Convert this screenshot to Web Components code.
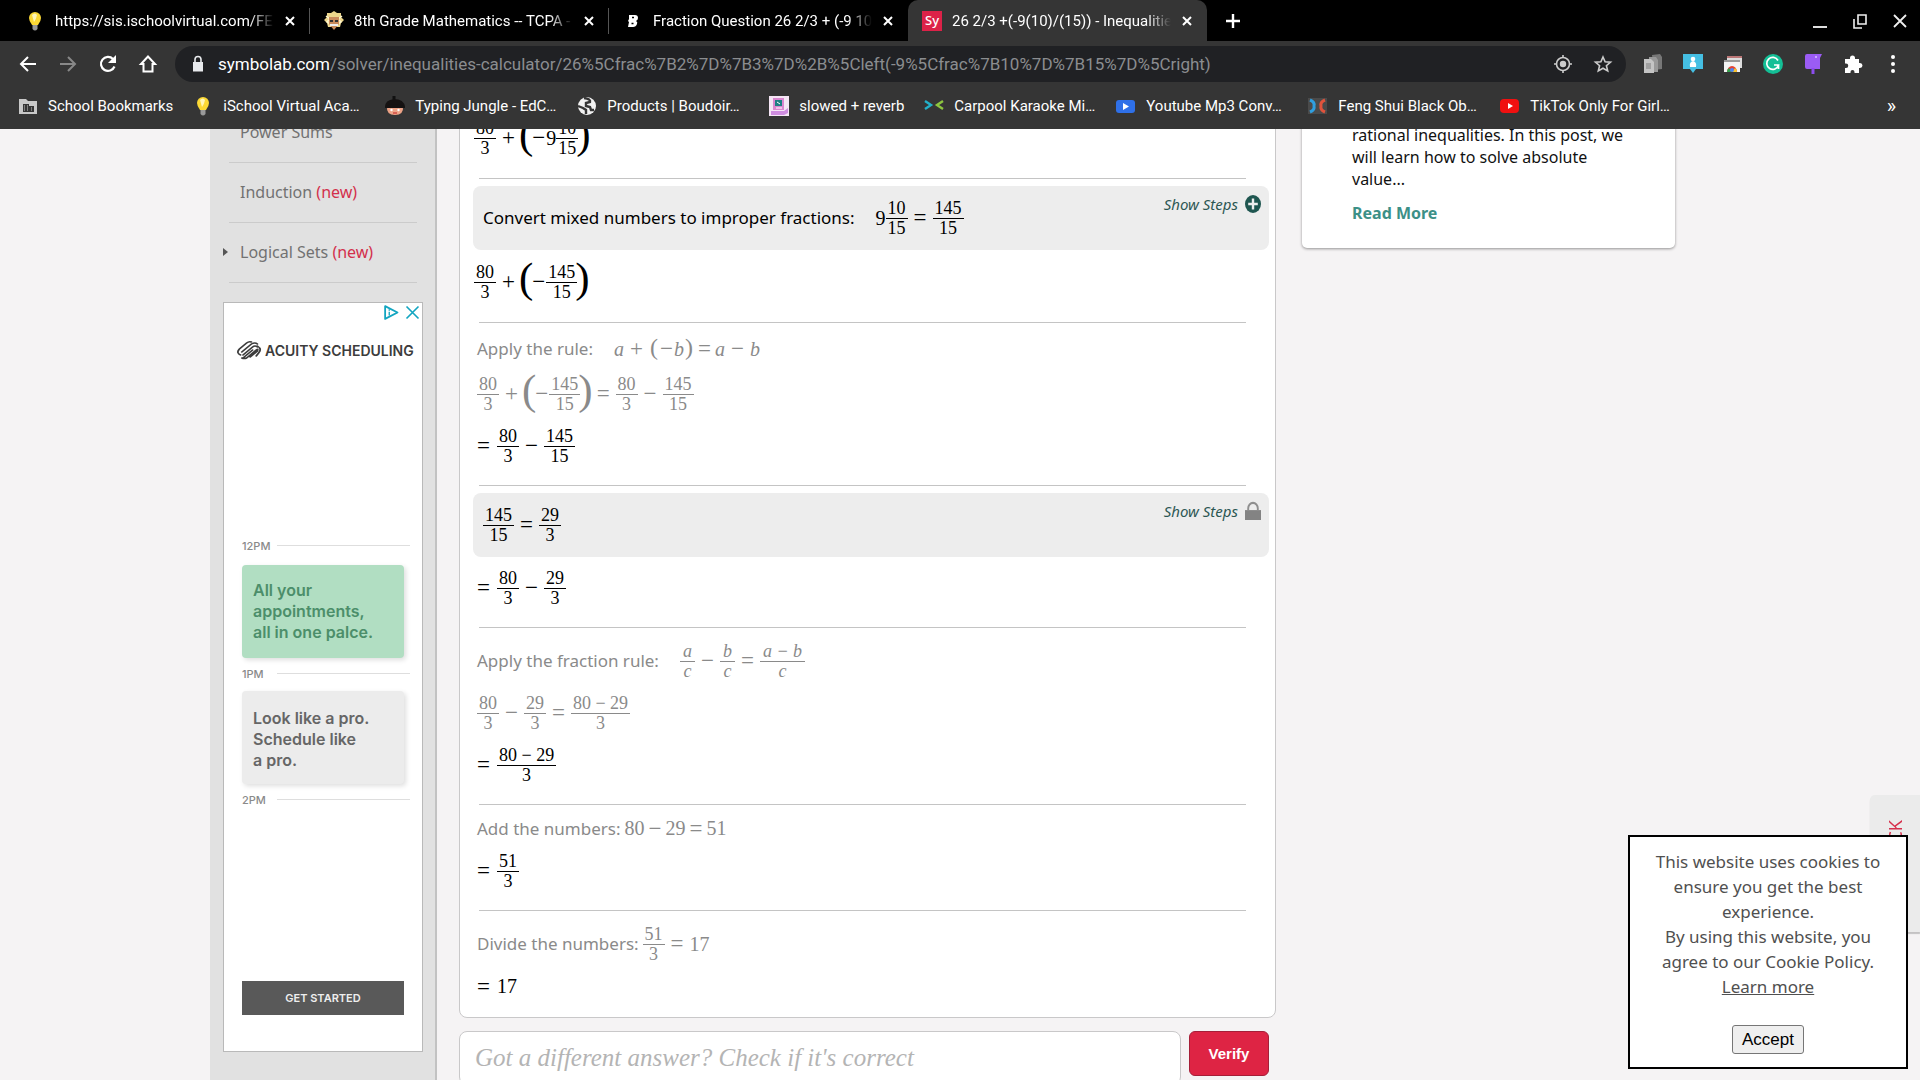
<!DOCTYPE html>
<html lang="en">
<head>
<meta charset="utf-8">
<title>Inequalities Calculator</title>
<style>
	html,body{
		margin: 0;
		height: 100%;
		overflow: hidden;
		background: #f5f3f4;
		font-family: "Noto Sans", sans-serif;
		font-size: 16px;
	}
	body{display: flex; flex-direction: column;}
</style>
</head>
<body>

<template id="ui-icon"><style>
	:host{display: inline-flex; flex: none; width: 20px; height: 20px;}
	svg{width: 100%; height: 100%; display: block; overflow: visible;}
</style><svg></svg></template>

<template id="browser-tab"><style>
	:host{
		display: flex;
		align-items: center;
		flex: 0 1 299px;
		min-width: 0;
		box-sizing: border-box;
		height: 41px;
		padding: 0 10px 0 14px;
		color: white;
		border-radius: 10px 10px 0 0;
	}
	:host([active]){background: #353535;}
	.title{
		flex: 1;
		min-width: 0;
		margin: 0 6px 0 10px;
		overflow: hidden;
		white-space: nowrap;
		-webkit-mask-image: linear-gradient(to left, transparent 0, black 24px);
		mask-image: linear-gradient(to left, transparent 0, black 24px);
	}
	button{display: flex; padding: 0; border: 0; background: none; color: inherit;}
	i{width: 1px; height: 26px; margin-right: -10px; margin-left: 9px; background: #555;}
	:host([active]) i, :host([last]) i{visibility: hidden;}
</style><slot name="icon"></slot><span class="title"><slot></slot></span><button aria-label="Close tab"><ui-icon name="close"></ui-icon></button><i></i></template>

<template id="tool-button"><style>
	:host{display: flex; flex: none;}
	button{display: flex; justify-content: center; align-items: center; width: 40px; height: 40px; padding: 0; border: 0; background: none; color: inherit;}
</style><button><slot></slot></button></template>

<template id="bookmark-link"><style>
	:host{display: flex; flex: none;}
	:host([full]){width: 172px;}
	a{display: flex; align-items: center; gap: 10px; color: white; text-decoration: none; white-space: nowrap;}
</style><a href="#"><slot name="icon"></slot><span><slot></slot></span></a></template>

<template id="browser-chrome"><style>
	:host{display: block; flex: none; position: relative; z-index: 2; font-family: Roboto, sans-serif; font-size: 15px; color: white; background: #353535;}
	.tabs{display: flex; align-items: center; height: 41px; padding-left: 11px; background: black;}
	.window{display: flex; margin-left: auto;}
	.bar{display: flex; align-items: center; height: 46px; padding: 0 7px 0 8px;}
	.omni{
		flex: 1;
		min-width: 0;
		display: flex;
		align-items: center;
		height: 36px;
		margin: 0 7px;
		padding: 0 3px 0 13px;
		border-radius: 18px;
		background: #202124;
		color: #9aa0a6;
		font-size: 17px;
	}
	.url{flex: 1; margin-left: 10px; white-space: nowrap; overflow: hidden; color: #8b8d90;}
	.dim{color: #888;}
	.marks{display: flex; align-items: center; gap: 20px; height: 38px; padding: 0 24px 4px 18px;}
	.more{margin-left: auto; border: 0; padding: 0; background: none; color: white; font: 20px Roboto, sans-serif;}
</style>
<div class="tabs"><slot name="tabs"></slot><div class="window">
	<tool-button label="Minimize"><ui-icon name="minimize"></ui-icon></tool-button>
	<tool-button label="Restore"><ui-icon name="restore"></ui-icon></tool-button>
	<tool-button label="Close"><ui-icon name="closewin"></ui-icon></tool-button>
</div></div>
<div class="bar">
	<tool-button label="Back"><ui-icon name="back"></ui-icon></tool-button>
	<tool-button label="Forward" class="dim"><ui-icon name="forward"></ui-icon></tool-button>
	<tool-button label="Reload"><ui-icon name="reload"></ui-icon></tool-button>
	<tool-button label="Home"><ui-icon name="home"></ui-icon></tool-button>
	<div class="omni"><ui-icon name="lock"></ui-icon><span class="url"><slot name="url"></slot></span>
		<tool-button label="Location"><ui-icon name="target"></ui-icon></tool-button>
		<tool-button label="Bookmark this page"><ui-icon name="star"></ui-icon></tool-button>
	</div>
	<slot name="extensions"></slot>
</div>
<div class="marks"><slot name="bookmarks"></slot><button class="more">»</button></div>
</template>

<template id="math-frac"><style>
	:host{display: inline-flex; flex-direction: column; align-items: center; font-size: 18px; line-height: 19px; white-space: nowrap;}
	span{padding: 0 2px;}
	.num{border-bottom: 1px solid; align-self: stretch; text-align: center;}
	:host([italic]) span{font-style: italic; padding: 0 3px;}
</style><span class="num"></span><span class="den"></span></template>

<template id="math-op"><style>
	:host{display: inline-block; margin: 0 6px; font-size: 23px; line-height: 20px;}
	:host([lead]){margin: 0 7px 0 0;}
	:host([tight]){margin: 0 4px;}
	:host([unary]){margin: 0 1px;}
</style><slot></slot></template>

<template id="math-paren"><style>
	:host{display: inline-block; margin: -8px -2px 0; font-size: 43px; line-height: 46px;}
	:host([small]){margin: -4px 1px 0; font-size: 24px; line-height: 30px;}
</style><slot></slot></template>

<template id="math-line"><style>
	:host{display: flex; align-items: center; height: 52px; padding-left: 4px; font-family: "Liberation Serif", serif; font-size: 20px; color: black; white-space: nowrap;}
	:host([flush]){padding-left: 1px; height: 54px;}
	:host([gray]){color: #8a8a8a;}
	:host([size="rule"]){height: 38px;}
	:host([size="text"]){height: 33px;}
	.label{font-family: "Noto Sans", sans-serif; font-size: 17px; line-height: 24px; white-space: pre;}
	.label:not(:empty){margin-right: 4px;}
	:host([wide]) .label{margin-right: 21px;}
</style><span class="label"></span><slot></slot></template>

<template id="step-box"><style>
	:host{display: flex; align-items: flex-start; min-height: 64px; margin-bottom: 5px; padding-right: 8px; background: #ededed; border-radius: 8px;}
	.body{flex: 1; padding: 6px 0 6px 6px;}
	button{display: flex; align-items: center; gap: 7px; margin-top: 7px; padding: 0; border: 0; background: none; color: #2c5753; font: italic 15px/22px "Noto Sans", sans-serif;}
	ui-icon{width: 16px; height: 18px;}
</style><div class="body"><slot></slot></div><button>Show Steps <ui-icon></ui-icon></button></template>

<template id="solution-card"><style>
	:host{display: block; box-sizing: border-box; padding: 7px 6px 14px 13px; background: white; border: 1px solid #c9c8c9; border-radius: 0 0 8px 8px;}
	::slotted(hr){margin: 13px 23px 7px 6px; border: 0; border-top: 1px solid #c4c4c4;}
</style><slot></slot></template>

<template id="answer-form"><style>
	:host{display: flex; align-items: flex-start; gap: 8px; margin-top: 13px; padding-right: 7px;}
	input{flex: 1; min-width: 0; box-sizing: border-box; height: 54px; padding: 0 15px; border: 1px solid #c9c8c9; border-radius: 8px; background: white; font: italic 25px "Liberation Serif", serif;}
	input::placeholder{color: #b4b4b4; opacity: 1;}
	button{width: 80px; height: 45px; padding: 0; border: 1px solid #a51f38; border-radius: 6px; background: #de2444; color: white; font: bold 15px "Liberation Sans", sans-serif;}
</style><input type="text" aria-label="Your answer" placeholder="Got a different answer? Check if it's correct"><button>Verify</button></template>

<template id="topic-item"><style>
	:host{display: block; height: 59px; margin: 0 18px 0 19px; border-bottom: 1px solid #cbcbcb;}
	a{display: flex; align-items: center; box-sizing: border-box; height: 100%; padding-bottom: 2px; color: #727272; text-decoration: none; font-size: 16px; white-space: pre;}
	i{width: 11px; margin-left: -6px; margin-right: 6px; display: flex;}
	i::before{content: ''; display: none; border: solid transparent; border-width: 4px 0 4px 5px; border-left-color: #555;}
	:host([expandable]) i::before{display: block;}
	.new{color: #d3304c;}
</style><a href="#"><i></i><slot></slot><span class="new"></span></a></template>

<template id="scheduling-ad"><style>
	:host{display: flex; flex-direction: column; box-sizing: border-box; height: 750px; margin: 19px 12px 0 13px; border: 1px solid #b9b9b9; background: white; font-family: Inter, sans-serif;}
	.choices{display: flex; justify-content: flex-end; gap: 6px; padding: 2px 2px 0;}
	.choices ui-icon{width: 15px; height: 15px;}
	.brand{display: flex; align-items: center; gap: 4px; margin: 18px 0 0 13px; height: 24px; font-size: 14px; font-weight: 600; color: #3c3c3c; white-space: nowrap;}
	.brand ui-icon{width: 24px; height: 20px;}
	.hour{display: flex; align-items: center; box-sizing: border-box; height: 33px; padding-bottom: 2px; margin: 0 12px 0 18px; color: #8a8a8a; font-size: 11px; font-weight: 500;}
	.hour span{width: 35px;}
	.hour::after{content: ''; flex: 1; border-top: 1px solid #dedede;}
	.note{display: flex; align-items: center; box-sizing: border-box; height: 93px; margin: 0 18px; padding-left: 11px; border-radius: 4px; font-size: 16px; line-height: 21px; font-weight: 600; box-shadow: 2px 2px 5px #0002;}
	.green{margin-top: 2px; background: #b1dec2; color: #4c8e6a;}
	.grey{padding-top: 4px; background: #ececec; color: #666;}
	.first{margin-top: 168px;}
	.cta{margin: auto 18px 36px; height: 34px; border: 0; background: #595959; color: #eee; font: 600 11px Inter, sans-serif;}
</style>
<div class="choices"><ui-icon name="adchoices"></ui-icon><ui-icon name="adclose"></ui-icon></div>
<div class="brand"><ui-icon name="acuity"></ui-icon>ACUITY SCHEDULING</div>
<div class="hour first"><span>12PM</span></div>
<div class="note green">All your<br>appointments,<br>all in one palce.</div>
<div class="hour"><span>1PM</span></div>
<div class="note grey">Look like a pro.<br>Schedule like<br>a pro.</div>
<div class="hour"><span>2PM</span></div>
<button class="cta">GET STARTED</button>
</template>

<template id="blog-card"><style>
	:host{display: block; box-sizing: border-box; padding: 21px 40px 24px 50px; background: white; border-radius: 5px; box-shadow: 0 1px 3px #0006; font-size: 16px; line-height: 22px; color: #111;}
	a{display: block; margin-top: 12px; color: #3c9087; font-size: 16px; font-weight: bold; text-decoration: none;}
</style><slot></slot><a href="#">Read More</a></template>

<template id="cookie-notice"><style>
	:host{
		position: fixed;
		right: 12px;
		bottom: 11px;
		z-index: 3;
		display: flex;
		flex-direction: column;
		align-items: center;
		box-sizing: border-box;
		width: 280px;
		padding: 12px 10px 13px;
		border: 2px solid black;
		background: white;
		color: #505050;
		font-size: 17px;
		line-height: 25px;
		text-align: center;
	}
	a{color: inherit;}
	button{margin-top: 26px; height: 29px; padding: 0 9px; border: 1px solid #767676; border-radius: 3px; background: #efefef; color: black; font: 17px "Liberation Sans", sans-serif;}
</style><div><slot></slot><br><a href="#">Learn more</a></div><button>Accept</button></template>

<template id="feedback-tab"><style>
	:host{position: fixed; right: 0; bottom: 148px; z-index: 1;}
	button{display: block; width: 50px; height: 137px; padding: 0; border: 0; border-radius: 5px 0 0 5px; background: #ebebeb; box-shadow: 0 2px 1px #0003; color: #d6304c; font: 18px "Noto Sans", sans-serif; writing-mode: vertical-rl;}
	span{display: inline-block; transform: rotate(180deg);}
</style><button><span>FEEDBACK</span></button></template>

<template id="page-columns"><style>
	:host{display: block; flex: 1; min-height: 0; overflow: hidden;}
	/* scrolled content: the first rows are partly out of view */
	.scrolled{display: grid; grid-template-columns: 227px minmax(0, 817px) 373px; align-items: start; margin-top: -26px; padding-left: 210px;}
	.side{box-sizing: border-box; min-height: 100vh; background: #e1e1e1; border-right: 2px solid #c2c2c2;}
	.main{margin-left: 22px; margin-right: -22px;}
	.aside{margin-left: 48px; margin-right: -48px;}
</style><div class="scrolled"><div class="side"><slot name="side"></slot></div><div class="main"><slot></slot></div><div class="aside"><slot name="aside"></slot></div></div></template>

<browser-chrome>
	<browser-tab slot="tabs"><ui-icon slot="icon" name="bulb"></ui-icon>https://sis.ischoolvirtual.com/FE</browser-tab>
	<browser-tab slot="tabs"><ui-icon slot="icon" name="einstein"></ui-icon>8th Grade Mathematics -- TCPA -</browser-tab>
	<browser-tab slot="tabs" last><ui-icon slot="icon" name="brainly"></ui-icon>Fraction Question 26 2/3 + (-9 10</browser-tab>
	<browser-tab slot="tabs" active><ui-icon slot="icon" name="symbolab"></ui-icon>26 2/3 +(-9(10)/(15)) - Inequalities</browser-tab>
	<tool-button slot="tabs" label="New tab" style="margin-left:6px"><ui-icon name="plus"></ui-icon></tool-button>
	<span slot="url"><span style="color:white">symbolab.com</span>/solver/inequalities-calculator/26%5Cfrac%7B2%7D%7B3%7D%2B%5Cleft(-9%5Cfrac%7B10%7D%7B15%7D%5Cright)</span>
	<tool-button slot="extensions" label="Copy pages"><ui-icon name="pages"></ui-icon></tool-button>
	<tool-button slot="extensions" label="Classroom"><ui-icon name="person"></ui-icon></tool-button>
	<tool-button slot="extensions" label="Web store"><ui-icon name="store"></ui-icon></tool-button>
	<tool-button slot="extensions" label="Grammarly"><ui-icon name="grammar"></ui-icon></tool-button>
	<tool-button slot="extensions" label="Highlighter"><ui-icon name="purple"></ui-icon></tool-button>
	<tool-button slot="extensions" label="Extensions"><ui-icon name="puzzle"></ui-icon></tool-button>
	<tool-button slot="extensions" label="Menu"><ui-icon name="dots"></ui-icon></tool-button>
	<bookmark-link slot="bookmarks"><ui-icon slot="icon" name="folder"></ui-icon>School Bookmarks</bookmark-link>
	<bookmark-link slot="bookmarks" full><ui-icon slot="icon" name="bulb"></ui-icon>iSchool Virtual Aca…</bookmark-link>
	<bookmark-link slot="bookmarks" full><ui-icon slot="icon" name="ninja"></ui-icon>Typing Jungle - EdC…</bookmark-link>
	<bookmark-link slot="bookmarks" full><ui-icon slot="icon" name="globe"></ui-icon>Products | Boudoir…</bookmark-link>
	<bookmark-link slot="bookmarks"><ui-icon slot="icon" name="computer"></ui-icon>slowed + reverb</bookmark-link>
	<bookmark-link slot="bookmarks" full><ui-icon slot="icon" name="arrows"></ui-icon>Carpool Karaoke Mi…</bookmark-link>
	<bookmark-link slot="bookmarks" full><ui-icon slot="icon" name="bluevideo"></ui-icon>Youtube Mp3 Conv…</bookmark-link>
	<bookmark-link slot="bookmarks" full><ui-icon slot="icon" name="feng"></ui-icon>Feng Shui Black Ob…</bookmark-link>
	<bookmark-link slot="bookmarks" full><ui-icon slot="icon" name="youtube"></ui-icon>TikTok Only For Girl…</bookmark-link>
</browser-chrome>

<page-columns>
	<topic-item slot="side">Power Sums</topic-item>
	<topic-item slot="side" new>Induction </topic-item>
	<topic-item slot="side" new expandable>Logical Sets </topic-item>
	<scheduling-ad slot="side"></scheduling-ad>

	<solution-card>
		<math-line flush><math-frac num="80" den="3"></math-frac><math-op>+</math-op><math-paren>(</math-paren><math-op unary>−</math-op>9<math-frac num="10" den="15"></math-frac><math-paren>)</math-paren></math-line>
		<hr>
		<step-box icon="plusround"><math-line label="Convert mixed numbers to improper fractions:" wide>9<math-frac num="10" den="15"></math-frac><math-op>=</math-op><math-frac num="145" den="15"></math-frac></math-line></step-box>
		<math-line flush><math-frac num="80" den="3"></math-frac><math-op>+</math-op><math-paren>(</math-paren><math-op unary>−</math-op><math-frac num="145" den="15"></math-frac><math-paren>)</math-paren></math-line>
		<hr>
		<math-line gray size="rule" label="Apply the rule:" wide><i>a</i><math-op>+</math-op><math-paren small>(</math-paren><math-op unary>−</math-op><i>b</i><math-paren small>)</math-paren><math-op tight>=</math-op><i>a</i><math-op>−</math-op><i>b</i></math-line>
		<math-line gray><math-frac num="80" den="3"></math-frac><math-op>+</math-op><math-paren>(</math-paren><math-op unary>−</math-op><math-frac num="145" den="15"></math-frac><math-paren>)</math-paren><math-op>=</math-op><math-frac num="80" den="3"></math-frac><math-op>−</math-op><math-frac num="145" den="15"></math-frac></math-line>
		<math-line><math-op lead>=</math-op><math-frac num="80" den="3"></math-frac><math-op>−</math-op><math-frac num="145" den="15"></math-frac></math-line>
		<hr>
		<step-box icon="padlock"><math-line><math-frac num="145" den="15"></math-frac><math-op>=</math-op><math-frac num="29" den="3"></math-frac></math-line></step-box>
		<math-line><math-op lead>=</math-op><math-frac num="80" den="3"></math-frac><math-op>−</math-op><math-frac num="29" den="3"></math-frac></math-line>
		<hr>
		<math-line gray label="Apply the fraction rule:" wide><math-frac italic num="a" den="c"></math-frac><math-op>−</math-op><math-frac italic num="b" den="c"></math-frac><math-op>=</math-op><math-frac italic num="a − b" den="c"></math-frac></math-line>
		<math-line gray><math-frac num="80" den="3"></math-frac><math-op>−</math-op><math-frac num="29" den="3"></math-frac><math-op>=</math-op><math-frac num="80 − 29" den="3"></math-frac></math-line>
		<math-line><math-op lead>=</math-op><math-frac num="80 − 29" den="3"></math-frac></math-line>
		<hr>
		<math-line gray size="text" label="Add the numbers:">80<math-op tight>−</math-op>29<math-op tight>=</math-op>51</math-line>
		<math-line><math-op lead>=</math-op><math-frac num="51" den="3"></math-frac></math-line>
		<hr>
		<math-line gray label="Divide the numbers:"><math-frac num="51" den="3"></math-frac><math-op>=</math-op>17</math-line>
		<math-line size="text"><math-op lead>=</math-op>17</math-line>
	</solution-card>
	<answer-form></answer-form>

	<blog-card slot="aside">rational inequalities. In this post, we<br>will learn how to solve absolute<br>value...</blog-card>
</page-columns>

<feedback-tab></feedback-tab>
<cookie-notice>This website uses cookies to<br>ensure you get the best<br>experience.<br>By using this website, you<br>agree to our Cookie Policy.</cookie-notice>

<script>
// all icons are drawn on a 20x20 grid
const ICONS = {
	close: '<path d="M6 6l8 8M14 6l-8 8" stroke="#fff" stroke-width="2"/>',
	plus: '<path d="M10 3v14M3 10h14" stroke="#fff" stroke-width="2.4"/>',
	minimize: '<path d="M3 16h14" stroke="#ddd" stroke-width="2"/>',
	restore: '<path d="M8 4h8v9H8zM4 8v9h8" stroke="#eee" stroke-width="1.6" fill="none"/>',
	closewin: '<path d="M4 4l12 12M16 4L4 16" stroke="#eee" stroke-width="1.8"/>',
	back: '<path d="M18 10H3M10 3l-7 7 7 7" fill="none" stroke="currentColor" stroke-width="2"/>',
	forward: '<path d="M2 10h15M10 3l7 7-7 7" fill="none" stroke="currentColor" stroke-width="2"/>',
	reload: '<path d="M16.5 12.5A7 7 0 1 1 15 5" fill="none" stroke="#fff" stroke-width="2.2"/><path d="M18 1v8h-8z" fill="#fff"/>',
	home: '<path d="M10 2.5L3 10h2.500v7.500h9V10H17z" fill="none" stroke="#fff" stroke-width="2"/>',
	lock: '<path d="M5 8h10v9.500H5z" fill="#e8eaed"/><path d="M7 8V5.500a3 3 0 0 1 6 0V8" fill="none" stroke="#e8eaed" stroke-width="1.6"/>',
	target: '<circle cx="10" cy="10" r="6.500" fill="none" stroke="#ccc" stroke-width="1.6"/><circle cx="10" cy="10" r="3.200" fill="#ccc"/><path d="M10 1v3M10 16v3M1 10h3M16 10h3" stroke="#ccc" stroke-width="1.6"/>',
	star: '<path d="M10 3l2.100 4.800 5.400.400-4.100 3.500 1.300 5.200L10 14.200l-4.700 2.700 1.300-5.200-4.100-3.500 5.400-.400z" fill="none" stroke="#ccc" stroke-width="1.6"/>',
	pages: '<path d="M9 1l8-1 2 3v12l-8 1z" fill="#777"/><path d="M6 3h7l2 3v12H6z" fill="#999"/><path d="M1 5h7l3 3v11H1z" fill="#c4c4c4"/><path d="M3 9h5v6H3z" fill="#a0a0a0"/>',
	person: '<path d="M0 0h20v15h-7l-3 4-3-4H0z" fill="#45bfe3"/><circle cx="10" cy="5" r="2.300" fill="#fff"/><path d="M7 13q-1-5 3-6 4 1 3 6z" fill="#fff"/>',
	store: '<path d="M4 2h15v12H4z" fill="#ddd"/><path d="M4 2h15v2H4z" fill="#b77"/><path d="M1 6h16v12H1z" fill="#f4f4f4"/><path d="M1 6h16v2H1z" fill="#999"/><path d="M4 18a5 6 0 0 1 10 0z" fill="#e34133"/><path d="M4 18q0-3 2-4l3 4z" fill="#31a350"/><path d="M14 18q0-3-2-4l-3 4z" fill="#f6c32d"/><circle cx="9" cy="16" r="2" fill="#4b86ef"/>',
	grammar: '<circle cx="10" cy="10" r="10" fill="#14bf96"/><path d="M15 6.500A6 6 0 1 0 15.500 11H11M15.500 11v4" fill="none" stroke="#fff" stroke-width="1.7"/>',
	purple: '<path d="M2 2q0-2 2-2h15l-2 4v11H4q-2 0-2-2z" fill="#9b5cf4"/><path d="M10 14v6" stroke="#8c4ded" stroke-width="3"/><circle cx="13" cy="3" r="1" fill="#d9c2ff"/>',
	puzzle: '<path d="M2 5h5V4a2.500 2.500 0 0 1 5 0v1h4v4h1a2.500 2.500 0 0 1 0 5h-1v5h-4.500v-1a2 2 0 0 0-4 0v1H2v-5h1a2.200 2.200 0 0 0 0-4.500H2z" fill="#fff"/>',
	dots: '<circle cx="10" cy="3" r="2" fill="#fff"/><circle cx="10" cy="10" r="2" fill="#fff"/><circle cx="10" cy="17" r="2" fill="#fff"/>',
	bulb: '<path d="M4 7a6 6 0 0 1 12 0q0 3-3 7H7Q4 10 4 7z" fill="#fcd935"/><path d="M7 4q3-3 5 0-1 5-3 7z" fill="#fff6b8"/><path d="M7.500 14h5v4q-2.500 3-5 0z" fill="#999"/>',
	einstein: '<path d="M10 0l3 2 4 0 0 4 3 3-3 3-1 4H4l-1-4-3-3 3-3 0-4 4 0z" fill="#ecd68c"/><path d="M2 5l4 3-3 3 3 2M18 5l-4 3 3 3-3 2" stroke="#fff6cf" stroke-width="1.4" fill="none"/><path d="M5 6h10v7l-5 6-5-6z" fill="#c98b5c"/><path d="M6 9h3v2H6zM11 9h3v2h-3z" fill="#333"/><path d="M6 13h8v2H6z" fill="#eee"/>',
	brainly: '<path d="M6 4h6q3 0 3 3 0 2-2 3 2 1 1 3-1 3-4 3H5l1-5-1-1 1-2z" fill="#fff"/><path d="M9 6.500h2M8.500 12.500h2" stroke="#000" stroke-width="1.6"/>',
	symbolab: '<path d="M0 0h20v20H0z" fill="#dc2248"/><text x="10" y="14" text-anchor="middle" font-family="Noto Sans,sans-serif" font-size="13" font-weight="500" fill="#fff">Sy</text>',
	folder: '<path d="M1 3h7l2 2h9v13H1z" fill="#c8c8c8"/><path d="M5 8h6v8H5zM11 10h5v6h-5z" fill="#353535"/><path d="M6 10h1M9 10h1M6 12h1M9 12h1M6 14h1M9 14h1M13 12h1M13 14h1" stroke="#c8c8c8" stroke-width="1"/>',
	ninja: '<path d="M9 0v4" stroke="#111" stroke-width="3"/><path d="M9 3Q0 4 0 11h20Q19 3 9 3z" fill="#151212"/><path d="M2 10h16q1 9-8 9t-8-9z" fill="#eda387"/><path d="M0 10q10-4 20 0v2H0z" fill="#151212"/><circle cx="6.500" cy="14" r="1.200" fill="#fff"/><circle cx="13.500" cy="14" r="1.200" fill="#fff"/><path d="M8 17h4" stroke="#c33" stroke-width="1.2"/>',
	globe: '<circle cx="10" cy="10" r="9" fill="#f1f1f1"/><path d="M7 2q7 1 6 4l-4 1v3l4 1 1 3 3 0M1 10l5 2 3 2v4" fill="none" stroke="#353535" stroke-width="2.4"/>',
	computer: '<path d="M0 0h20v20H0z" fill="#f5e6f5"/><path d="M4 2h11v12H4z" fill="#d987d0"/><path d="M6 4h7v6H6z" fill="#1d7f84"/><path d="M2 15h13l4-3v5l-4 2H2z" fill="#cf8de0"/><path d="M8 6l3 2M7 12h6" stroke="#fff" stroke-width="1"/>',
	arrows: '<path d="M1 5l6 4-6 4" fill="none" stroke="#22b0c9" stroke-width="2.4"/><path d="M19 5l-6 4 6 4" fill="none" stroke="#8dc63f" stroke-width="2.4"/>',
	bluevideo: '<rect x="0" y="4" width="19" height="13" rx="3" fill="#2f70e8"/><path d="M7 7l6 3.500L7 14z" fill="#fff"/>',
	feng: '<path d="M0 2h19v16H0z" fill="#4a4a4a"/><path d="M2 4q5 2 4 6 1 4-4 6" fill="none" stroke="#2f9fe0" stroke-width="3"/><path d="M17 4q-5 2-4 6-1 4 4 6" fill="none" stroke="#e0533c" stroke-width="3"/>',
	youtube: '<rect x="0" y="3" width="19" height="14" rx="4" fill="#f01010"/><path d="M8 7l5 3-5 3z" fill="#fff"/>',
	plusround: '<circle cx="10" cy="10" r="10" fill="#1f5650"/><path d="M10 4v12M4 10h12" stroke="#eee" stroke-width="3"/>',
	padlock: '<path d="M0 9h20v11H0z" fill="#838383"/><path d="M4 9V7a6 6 0 0 1 12 0v2" fill="none" stroke="#8f8f8f" stroke-width="2.4"/>',
	adchoices: '<path d="M1.500 1.500v17L18 10z" fill="none" stroke="#12a5c0" stroke-width="2.4" stroke-linejoin="round"/><path d="M7 9v5M7 5.500v2" stroke="#12a5c0" stroke-width="1.8"/>',
	adclose: '<path d="M2 2l16 16M18 2L2 18" stroke="#12a5c0" stroke-width="2.2"/>',
	acuity: '<path d="M12 2Q10 1 8 3L2 9q-3 4 1 6M4 12l8-8q3-2 5 0M5 15l8-8q2-2 4 0M8 18q-2 1-4 0M8 18l8-8q2-2 1 1l-6 6M16 16l2-3q3-4-1-7M13 10l-8 8" fill="none" stroke="#3c3c3c" stroke-width="1.5" stroke-linecap="round"/>',
};

function define(name, init){
	window.customElements.define(name, class extends HTMLElement {
		constructor() {
			super();
			this.$ = q => this.shadowRoot.querySelector(q);
			this.attachShadow({mode: 'open'}).appendChild(document.querySelector('#'+name).content.cloneNode(true));
		}
		connectedCallback(){
			if(init) init.call(this);
		}
	});
}

define('ui-icon', function(){
	var svg = this.$('svg');
	svg.setAttribute('viewBox','0 0 20 20');
	svg.setAttribute('preserveAspectRatio','none');
	svg.setAttribute('aria-hidden','true');
	svg.innerHTML = ICONS[this.getAttribute('name')] || '';
});
define('tool-button', function(){
	this.$('button').setAttribute('aria-label', this.getAttribute('label'));
});
define('math-frac', function(){
	this.$('.num').textContent = this.getAttribute('num');
	this.$('.den').textContent = this.getAttribute('den');
});
define('math-line', function(){
	this.$('.label').textContent = this.getAttribute('label') || '';
});
define('step-box', function(){
	var icon = document.createElement('ui-icon');
	icon.setAttribute('name', this.getAttribute('icon'));
	this.$('ui-icon').replaceWith(icon);
});
define('topic-item', function(){
	if(this.hasAttribute('new')) this.$('.new').textContent = '(new)';
});
['browser-tab','bookmark-link','browser-chrome','math-op','math-paren','solution-card','answer-form',
	'scheduling-ad','blog-card','cookie-notice','feedback-tab','page-columns'].forEach(name=>define(name));
</script>
</body>
</html>
